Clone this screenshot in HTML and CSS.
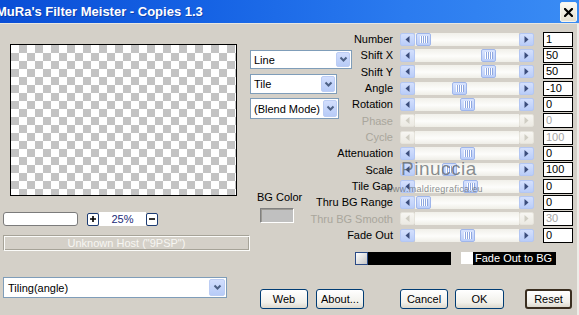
FILE: index.html
```html
<!DOCTYPE html>
<html>
<head>
<meta charset="utf-8">
<link rel="stylesheet" href="styles.css">
</head>
<body>
<div class="window">
  <div class="titlebar">
    <span class="title">MuRa's Filter Meister - Copies 1.3</span>
    <span class="close"><svg width="9" height="9" viewBox="0 0 9 9"><path d="M1 1 L8 8 M8 1 L1 8" stroke="#000" stroke-width="2.2" stroke-linecap="square"/></svg></span>
  </div>
  <div class="main">
    <div class="left">
      <div class="preview"></div>
      <div class="zoomrow">
        <div class="zinput"></div>
        <span class="zbtn"><svg width="8" height="8" viewBox="0 0 8 8"><path d="M4 1 V7 M1 4 H7" stroke="#000" stroke-width="1.6"/></svg></span>
        <span class="zval">25%</span>
        <span class="zbtn"><svg width="8" height="8" viewBox="0 0 8 8"><path d="M1 4 H7" stroke="#000" stroke-width="1.6"/></svg></span>
      </div>
      <div class="host">Unknown Host ("9PSP")</div>
      <div class="combo tiling"><span class="ctext">Tiling(angle)</span><span class="dd"><svg width="9" height="7" viewBox="0 0 9 7"><path d="M1.5 1.5 L4.5 4.5 L7.5 1.5" fill="none" stroke="#4d6185" stroke-width="2"/></svg></span></div>
    </div>
    <div class="right">
      <div class="grid">
        <div class="combos">
          <div class="combo c-line"><span class="ctext">Line</span><span class="dd"><svg width="9" height="7" viewBox="0 0 9 7"><path d="M1.5 1.5 L4.5 4.5 L7.5 1.5" fill="none" stroke="#4d6185" stroke-width="2"/></svg></span></div>
          <div class="combo c-tile"><span class="ctext">Tile</span><span class="dd"><svg width="9" height="7" viewBox="0 0 9 7"><path d="M1.5 1.5 L4.5 4.5 L7.5 1.5" fill="none" stroke="#4d6185" stroke-width="2"/></svg></span></div>
          <div class="combo c-blend"><span class="ctext">(Blend Mode)</span><span class="dd"><svg width="9" height="7" viewBox="0 0 9 7"><path d="M1.5 1.5 L4.5 4.5 L7.5 1.5" fill="none" stroke="#4d6185" stroke-width="2"/></svg></span></div>
        </div>
        <div class="bg">
          <div class="bglabel">BG Color</div>
          <div class="swatch"></div>
        </div>

        <div class="lbl">Number</div>
        <div class="slider"><span class="sb"><svg width="5" height="7" viewBox="0 0 5 7"><path d="M4.5 0 L0.5 3.5 L4.5 7 Z"/></svg></span><span class="track"></span><span class="sb"><svg width="5" height="7" viewBox="0 0 5 7"><path d="M0.5 0 L4.5 3.5 L0.5 7 Z"/></svg></span><span class="thumb" style="left:16px"></span></div>
        <div class="val">1</div>

        <div class="lbl">Shift X</div>
        <div class="slider"><span class="sb"><svg width="5" height="7" viewBox="0 0 5 7"><path d="M4.5 0 L0.5 3.5 L4.5 7 Z"/></svg></span><span class="track"></span><span class="sb"><svg width="5" height="7" viewBox="0 0 5 7"><path d="M0.5 0 L4.5 3.5 L0.5 7 Z"/></svg></span><span class="thumb" style="left:81px"></span></div>
        <div class="val">50</div>

        <div class="lbl">Shift Y</div>
        <div class="slider"><span class="sb"><svg width="5" height="7" viewBox="0 0 5 7"><path d="M4.5 0 L0.5 3.5 L4.5 7 Z"/></svg></span><span class="track"></span><span class="sb"><svg width="5" height="7" viewBox="0 0 5 7"><path d="M0.5 0 L4.5 3.5 L0.5 7 Z"/></svg></span><span class="thumb" style="left:81px"></span></div>
        <div class="val">50</div>

        <div class="lbl">Angle</div>
        <div class="slider"><span class="sb"><svg width="5" height="7" viewBox="0 0 5 7"><path d="M4.5 0 L0.5 3.5 L4.5 7 Z"/></svg></span><span class="track"></span><span class="sb"><svg width="5" height="7" viewBox="0 0 5 7"><path d="M0.5 0 L4.5 3.5 L0.5 7 Z"/></svg></span><span class="thumb" style="left:52px"></span></div>
        <div class="val">-10</div>

        <div class="lbl">Rotation</div>
        <div class="slider"><span class="sb"><svg width="5" height="7" viewBox="0 0 5 7"><path d="M4.5 0 L0.5 3.5 L4.5 7 Z"/></svg></span><span class="track"></span><span class="sb"><svg width="5" height="7" viewBox="0 0 5 7"><path d="M0.5 0 L4.5 3.5 L0.5 7 Z"/></svg></span><span class="thumb" style="left:60px"></span></div>
        <div class="val">0</div>

        <div class="lbl dis">Phase</div>
        <div class="slider off"><span class="sb"><svg width="5" height="7" viewBox="0 0 5 7"><path d="M4.5 0 L0.5 3.5 L4.5 7 Z"/></svg></span><span class="track"></span><span class="sb"><svg width="5" height="7" viewBox="0 0 5 7"><path d="M0.5 0 L4.5 3.5 L0.5 7 Z"/></svg></span></div>
        <div class="val dis">0</div>

        <div class="lbl dis">Cycle</div>
        <div class="slider off"><span class="sb"><svg width="5" height="7" viewBox="0 0 5 7"><path d="M4.5 0 L0.5 3.5 L4.5 7 Z"/></svg></span><span class="track"></span><span class="sb"><svg width="5" height="7" viewBox="0 0 5 7"><path d="M0.5 0 L4.5 3.5 L0.5 7 Z"/></svg></span></div>
        <div class="val dis">100</div>

        <div class="lbl">Attenuation</div>
        <div class="slider"><span class="sb"><svg width="5" height="7" viewBox="0 0 5 7"><path d="M4.5 0 L0.5 3.5 L4.5 7 Z"/></svg></span><span class="track"></span><span class="sb"><svg width="5" height="7" viewBox="0 0 5 7"><path d="M0.5 0 L4.5 3.5 L0.5 7 Z"/></svg></span><span class="thumb" style="left:60px"></span></div>
        <div class="val">0</div>

        <div class="lbl">Scale</div>
        <div class="slider"><span class="sb"><svg width="5" height="7" viewBox="0 0 5 7"><path d="M4.5 0 L0.5 3.5 L4.5 7 Z"/></svg></span><span class="track"></span><span class="sb"><svg width="5" height="7" viewBox="0 0 5 7"><path d="M0.5 0 L4.5 3.5 L0.5 7 Z"/></svg></span><span class="thumb" style="left:42px"></span></div>
        <div class="val">100</div>

        <div class="lbl">Tile Gap</div>
        <div class="slider"><span class="sb"><svg width="5" height="7" viewBox="0 0 5 7"><path d="M4.5 0 L0.5 3.5 L4.5 7 Z"/></svg></span><span class="track"></span><span class="sb"><svg width="5" height="7" viewBox="0 0 5 7"><path d="M0.5 0 L4.5 3.5 L0.5 7 Z"/></svg></span><span class="thumb" style="left:63px"></span></div>
        <div class="val">0</div>

        <div class="lbl">Thru BG Range</div>
        <div class="slider"><span class="sb"><svg width="5" height="7" viewBox="0 0 5 7"><path d="M4.5 0 L0.5 3.5 L4.5 7 Z"/></svg></span><span class="track"></span><span class="sb"><svg width="5" height="7" viewBox="0 0 5 7"><path d="M0.5 0 L4.5 3.5 L0.5 7 Z"/></svg></span><span class="thumb" style="left:16px"></span></div>
        <div class="val">0</div>

        <div class="lbl dis">Thru BG Smooth</div>
        <div class="slider off"><span class="sb"><svg width="5" height="7" viewBox="0 0 5 7"><path d="M4.5 0 L0.5 3.5 L4.5 7 Z"/></svg></span><span class="track"></span><span class="sb"><svg width="5" height="7" viewBox="0 0 5 7"><path d="M0.5 0 L4.5 3.5 L0.5 7 Z"/></svg></span></div>
        <div class="val dis">30</div>

        <div class="lbl">Fade Out</div>
        <div class="slider"><span class="sb"><svg width="5" height="7" viewBox="0 0 5 7"><path d="M4.5 0 L0.5 3.5 L4.5 7 Z"/></svg></span><span class="track"></span><span class="sb"><svg width="5" height="7" viewBox="0 0 5 7"><path d="M0.5 0 L4.5 3.5 L0.5 7 Z"/></svg></span><span class="thumb" style="left:60px"></span></div>
        <div class="val">0</div>
      </div>
      <div class="colorrow">
        <span class="csq"></span><span class="cbar"></span>
        <span class="chk"></span><span class="clabel">Fade Out to BG</span>
      </div>
      <div class="buttons">
        <span class="btn b-web">Web</span>
        <span class="btn b-about">About...</span>
        <span class="btn b-cancel">Cancel</span>
        <span class="btn b-ok">OK</span>
        <span class="btn b-reset">Reset</span>
      </div>
    </div>
  </div>
  <div class="watermark">
    <div class="wm1">Pinuccia</div>
    <div class="wm2">www.maldiregrafica.eu</div>
  </div>
</div>
</body>
</html>
```

FILE: styles.css
```css
* { box-sizing: border-box; }
html, body { margin: 0; padding: 0; }
body {
  width: 579px;
  height: 315px;
  overflow: hidden;
  font-family: "Liberation Sans", Arial, sans-serif;
  font-size: 11px;
  color: #000;
}
.window {
  position: relative;
  width: 579px;
  height: 315px;
  background: #d4d0c8;
  display: flex;
  flex-direction: column;
  overflow: hidden;
}
.titlebar {
  flex: none;
  height: 24px;
  display: flex;
  align-items: center;
  justify-content: space-between;
  background: linear-gradient(to right, #0a4ed6 0%, #1562e4 35%, #2b7bef 70%, #3a8cf4 100%);
  border-bottom: 1px solid #e9e7e0;
}
.title {
  color: #fff;
  font-weight: bold;
  font-size: 13px;
  margin-left: -4px;
  white-space: nowrap;
  text-shadow: 1px 1px 0 rgba(10, 30, 110, 0.45);
}
.close {
  width: 17px;
  height: 20px;
  margin-right: 2px;
  margin-top: 1px;
  display: flex;
  align-items: center;
  justify-content: center;
  background: linear-gradient(#fbfaf4, #e4e0d2);
  border: 1px solid #f6f5ef;
  border-radius: 2px;
}
.main {
  flex: 1;
  display: flex;
  border-right: 2px solid #eeede8;
}
.left {
  width: 250px;
  padding-left: 3px;
  display: flex;
  flex-direction: column;
  align-items: flex-start;
}
.preview {
  margin-top: 20px;
  margin-left: 7px;
  width: 227px;
  height: 152px;
  border: 1px solid #000;
  background-color: #fff;
  background-image: conic-gradient(#c3c3c3 25%, #fff 0 50%, #c3c3c3 0 75%, #fff 0);
  background-size: 16px 16px;
}
.zoomrow {
  margin-top: 16px;
  display: flex;
  align-items: center;
  height: 14px;
}
.zinput {
  width: 75px;
  height: 14px;
  background: #fff;
  border: 1px solid #7b7b7b;
  border-radius: 3px;
}
.zbtn {
  width: 12px;
  height: 13px;
  border: 1px solid #1d3c73;
  border-radius: 2px;
  background: #fff;
  display: flex;
  align-items: center;
  justify-content: center;
}
.zoomrow .zbtn:nth-child(2) { margin-left: 9px; }
.zval {
  width: 47px;
  height: 14px;
  background: #fff;
  color: #1a2a78;
  text-align: center;
  line-height: 14px;
  font-size: 11px;
}
.host {
  margin-top: 9px;
  width: 247px;
  height: 16px;
  border: 1px solid;
  border-color: #a6a398 #fbfbf9 #fbfbf9 #a6a398;
  box-shadow: inset 1px 1px 0 #fbfbf9, inset -1px -1px 0 #a6a398;
  color: #f7f6f2;
  text-align: center;
  line-height: 14px;
  font-size: 11px;
}
.combo {
  display: flex;
  align-items: center;
  background: #fff;
  border: 1px solid #7f9db9;
  padding-left: 3px;
  font-size: 11px;
}
.ctext { flex: 1; white-space: nowrap; }
.dd {
  width: 14px;
  align-self: stretch;
  margin: 1px;
  background: linear-gradient(#d2defd, #b7cbf7);
  border: 1px solid #bccdf4;
  border-radius: 2px;
  display: flex;
  align-items: center;
  justify-content: center;
}
.tiling {
  margin-top: 26px;
  width: 224px;
  height: 21px;
  padding-left: 4px;
}
.tiling .dd { width: 16px; }
.right {
  width: 327px;
  display: flex;
  flex-direction: column;
}
.grid {
  margin-top: 7px;
  display: grid;
  grid-template-columns: 62px 81px 7px 134px 9px 30px;
  grid-auto-rows: 16.33px;
}
.combos {
  grid-column: 1;
  grid-row: 1 / span 6;
  padding-top: 19px;
  display: flex;
  flex-direction: column;
  align-items: flex-start;
}
.c-line { width: 102px; height: 19px; }
.c-tile { width: 87px; height: 20px; margin-top: 5px; }
.c-blend { width: 89px; height: 21px; margin-top: 4px; }
.bg {
  grid-column: 1;
  grid-row: 10 / span 3;
  padding-top: 13px;
}
.bglabel {
  padding-left: 7px;
  line-height: 13px;
  white-space: nowrap;
  font-size: 11px;
}
.swatch {
  margin-top: 4px;
  margin-left: 10px;
  width: 34px;
  height: 15px;
  background: #c0c0c0;
  border: 1px solid;
  border-color: #808080 #fff #fff #808080;
  box-shadow: inset 1px 1px 0 #9c9a94;
}
.lbl {
  grid-column: 2;
  justify-self: end;
  white-space: nowrap;
  line-height: 16.33px;
  font-size: 11px;
}
.lbl.dis { color: #a9a69c; }
.slider {
  grid-column: 4;
  align-self: center;
  position: relative;
  height: 13px;
  display: flex;
}
.track {
  flex: 1;
  background: linear-gradient(#f1f0ea, #fdfdfb 55%, #efeee7);
}
.sb {
  width: 15px;
  height: 13px;
  background: linear-gradient(#d4e0fd, #bacdf8);
  border: 1px solid #b4c7f3;
  border-radius: 2px;
  display: flex;
  align-items: center;
  justify-content: center;
  fill: #3b4d7c;
}
.slider.off .sb {
  background: linear-gradient(#f7f6f2, #eceae3);
  border-color: #e6e4dc;
  fill: #cfcdc3;
}
.thumb {
  position: absolute;
  top: 0;
  width: 15px;
  height: 13px;
  background: linear-gradient(#d8e3fd, #bbcef9);
  border: 1px solid #9fb6eb;
  border-radius: 2px;
}
.thumb::after {
  content: "";
  position: absolute;
  left: 3px;
  top: 2px;
  width: 8px;
  height: 7px;
  background: repeating-linear-gradient(to right, #fff 0 1px, #8ea7e0 1px 2px);
}
.val {
  grid-column: 6;
  align-self: center;
  height: 15px;
  background: #fff;
  border: 1px solid #000;
  padding-left: 2px;
  line-height: 13px;
  font-size: 11px;
}
.val.dis { color: #a6a6a6; }
.colorrow {
  margin-top: 9px;
  margin-left: 105px;
  height: 13px;
  display: flex;
}
.csq {
  width: 13px;
  height: 13px;
  border: 1px solid #2a4a86;
  background: linear-gradient(135deg, #ffffff, #c4c4c4);
}
.cbar {
  width: 83px;
  height: 13px;
  background: #000;
}
.chk {
  margin-left: 10px;
  width: 12px;
  height: 12px;
  background: #fff;
}
.clabel {
  width: 83px;
  height: 13px;
  background: #000;
  color: #fff;
  line-height: 13px;
  padding-left: 2px;
  font-size: 11px;
  white-space: nowrap;
}
.buttons {
  margin-top: 24px;
  margin-left: 10px;
  display: flex;
  height: 20px;
}
.btn {
  height: 20px;
  display: flex;
  align-items: center;
  justify-content: center;
  background: linear-gradient(#ffffff, #f1f0ea 70%, #dcd8cc);
  border: 1px solid #003c74;
  border-radius: 3px;
  font-size: 11px;
}
.b-web { width: 48px; }
.b-about { width: 48px; margin-left: 8px; }
.b-cancel { width: 48px; margin-left: 36px; }
.b-ok { width: 49px; margin-left: 7px; }
.b-reset { width: 47px; margin-left: 21px; border: 2px solid #3a2e20; }
.watermark {
  position: absolute;
  left: 386px;
  top: 159px;
  pointer-events: none;
  color: rgba(85, 92, 98, 0.7);
}
.wm1 {
  margin-left: 15px;
  font-size: 19px;
  line-height: 20px;
  letter-spacing: 0.5px;
}
.wm2 {
  font-size: 9px;
  line-height: 10px;
  margin-top: 5px;
  letter-spacing: 0.3px;
}
```
